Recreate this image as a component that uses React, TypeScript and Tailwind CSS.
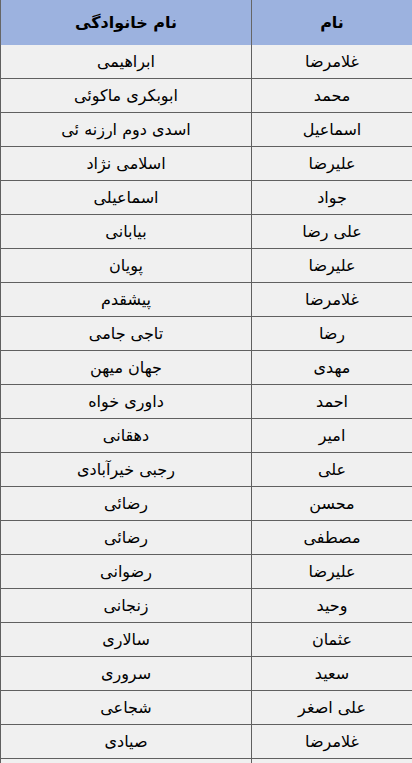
const rows: [string, string][] = [
  ["غلامرضا", "ابراهیمی"],
  ["محمد", "ابوبکری ماکوئی"],
  ["اسماعیل", "اسدی دوم ارزنه ئی"],
  ["علیرضا", "اسلامی نژاد"],
  ["جواد", "اسماعیلی"],
  ["علی رضا", "بیابانی"],
  ["علیرضا", "پویان"],
  ["غلامرضا", "پیشقدم"],
  ["رضا", "تاجی جامی"],
  ["مهدی", "جهان میهن"],
  ["احمد", "داوری خواه"],
  ["امیر", "دهقانی"],
  ["علی", "رجبی خیرآبادی"],
  ["محسن", "رضائی"],
  ["مصطفی", "رضائی"],
  ["علیرضا", "رضوانی"],
  ["وحید", "زنجانی"],
  ["عثمان", "سالاری"],
  ["سعید", "سروری"],
  ["علی اصغر", "شجاعی"],
  ["غلامرضا", "صیادی"],
  ["", ""],
];

export default function App() {
  return (
    <div
      dir="rtl"
      className="h-[763px] w-[412px] overflow-hidden bg-[#f0f0f0] text-black"
      style={{ fontFamily: '"DejaVu Sans", "Noto Sans", sans-serif' }}
    >
      <div className="flex h-[45px] bg-[#9cb2df] text-[16px] font-bold">
        <div className="flex w-[161px] items-center justify-center border-l border-[#666]">
          نام
        </div>
        <div className="flex flex-1 items-center justify-center border-l border-[#666]">
          نام خانوادگی
        </div>
      </div>
      {rows.map(([first, last], i) => (
        <div key={i} className="flex h-[34px] border-b border-[#606060] text-[16px]">
          <div className="flex w-[161px] items-center justify-center border-l border-[#606060]">
            {first}
          </div>
          <div className="flex flex-1 items-center justify-center border-l border-[#606060]">
            {last}
          </div>
        </div>
      ))}
    </div>
  );
}
